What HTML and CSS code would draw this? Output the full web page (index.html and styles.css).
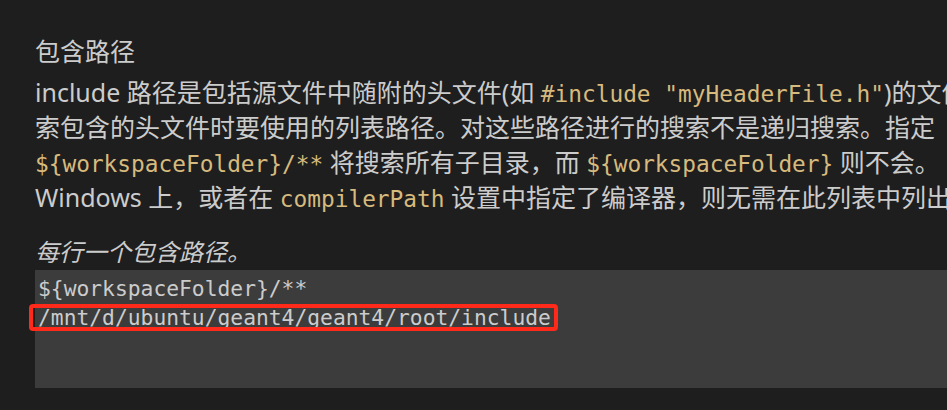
FILE: index.html
```html
<!DOCTYPE html>
<html lang="zh-CN">
<head>
<meta charset="utf-8">
<title>包含路径</title>
<link rel="stylesheet" href="styles.css">
</head>
<body>
<div class="setting">
  <div class="title">包含路径</div>
  <div class="desc">
    <div class="line">include 路径是包括源文件中随附的头文件(如 <code>#include "myHeaderFile.h"</code>)的文件夹。</div>
    <div class="line">索包含的头文件时要使用的列表路径。对这些路径进行的搜索不是递归搜索。指定</div>
    <div class="line"><code>${workspaceFolder}/**</code> 将搜索所有子目录，而 <code>${workspaceFolder}</code> 则不会。</div>
    <div class="line">Windows 上，或者在 <code>compilerPath</code> 设置中指定了编译器，则无需在此列表中列出系统包含路径。</div>
  </div>
  <div class="hint">每行一个包含路径。</div>
  <div class="editor">
    <div class="eline">${workspaceFolder}/**</div>
    <div class="eline"><span class="mark">/mnt/d/ubuntu/geant4/geant4/root/include</span></div>
  </div>
</div>
</body>
</html>
```
FILE: styles.css
```css
html, body {
  margin: 0;
  padding: 0;
  background: #1e1e1e;
  overflow: hidden;
}
body {
  width: 947px;
  height: 410px;
  font-family: "Noto Sans", "Noto Sans CJK SC", sans-serif;
  color: #cccccc;
}
.setting {
  padding: 34px 0 0 35px;
  width: 1300px;
}
.title {
  font-size: 25px;
  line-height: 35px;
  height: 35px;
}
.desc {
  margin-top: 6px;
  font-size: 25px;
}
.line {
  line-height: 35px;
  height: 35px;
  white-space: nowrap;
}
code {
  font-family: "DejaVu Sans Mono", monospace;
  font-size: 22.8px;
  color: #d7ba7d;
}
.hint {
  margin-top: 19px;
  font-size: 24px;
  line-height: 35px;
  height: 35px;
  font-style: italic;
}
.editor {
  margin-top: 1px;
  background: #3c3c3c;
  height: 118px;
  box-sizing: border-box;
  padding: 4px 0 0 3px;
  font-family: "DejaVu Sans Mono", monospace;
  font-size: 21.3px;
  color: #cccccc;
}
.eline {
  line-height: 29px;
  height: 29px;
  white-space: nowrap;
}
.mark {
  position: relative;
}
.mark::after {
  content: "";
  position: absolute;
  left: -9px;
  right: -7px;
  top: -1px;
  bottom: -1px;
  border: 4px solid #ff2a1a;
  border-radius: 4px;
}
```
